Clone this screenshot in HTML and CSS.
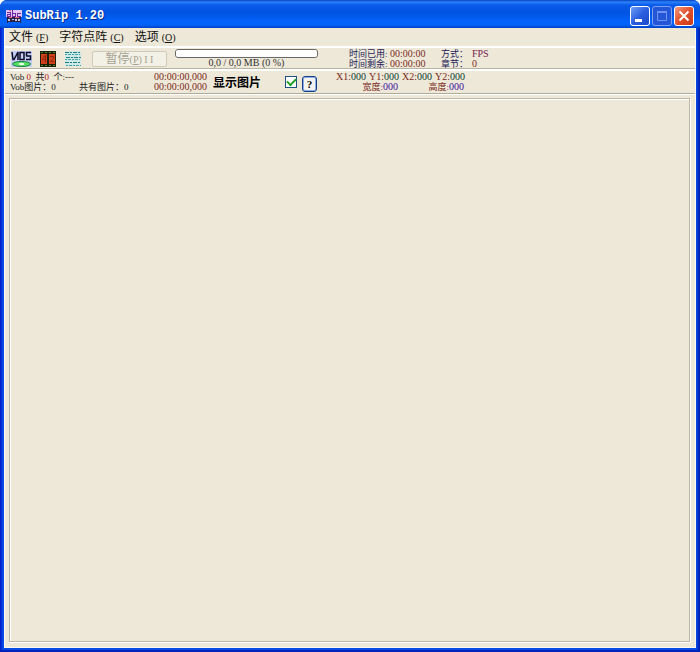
FILE: index.html
```html
<!DOCTYPE html>
<html lang="zh">
<head>
	<meta charset="UTF-8">
	<title>SubRip 1.20</title>
<link rel="stylesheet" href="styles.css">
</head>
<body>
<div class="window">
	<div class="titlebar">
		<svg class="logo" width="16" height="16" viewBox="0 0 16 16" shape-rendering="crispEdges">
			<path fill="#2a2348" d="M1 9h14v6h-1v-1H2v1H1z"/>
			<path fill="#e3c4f2" d="M0 2h16v7H0z"/>
			<path fill="none" stroke="#6d28a0" d="M1 4.500h3M4.500 4v5M4 8.500H1.500v-2H4M6.500 2v7M7 5.500h2.500v3H7M15 5.500h-3.500v3H15"/>
			<path fill="#e8607c" d="M3 9h3v1H3zM9 9h4v1H9zM3 2h2v1H3z"/>
			<path fill="#c9c3e6" d="M2 11h2v2H2zM6 11h2v1H6zM9 11h2v2H9zM12 11h2v2h-2z"/>
		</svg>
		<span class="title">SubRip 1.20</span>
		<button class="winbtn" aria-label="最小化">
			<svg width="18" height="18" viewBox="0 0 18 18"><path fill="#fff" d="M4 12h7v3H4z"/></svg>
		</button>
		<button class="winbtn off" aria-label="最大化" disabled>
			<svg width="18" height="18" viewBox="0 0 18 18"><path fill="none" stroke="#6f93f2" d="M4.500 5.500h9v8h-9zM4 4.500h10"/></svg>
		</button>
		<button class="winbtn close" aria-label="关闭">
			<svg width="18" height="18" viewBox="0 0 18 18"><path stroke="#fff" stroke-width="2" d="M4.500 4.500l9 9M13.500 4.500l-9 9"/></svg>
		</button>
	</div>
	<div class="client">
		<div class="menu">
			<a href="#">文件 <span>(<u>F</u>)</span></a>
			<a href="#">字符点阵 <span>(<u>C</u>)</span></a>
			<a href="#">选项 <span>(<u>O</u>)</span></a>
		</div>
		<div class="toolbar">
			<button class="tool" aria-label="VOB">
				<svg width="21" height="18" viewBox="0 0 21 18">
					<path fill="#c5cdf5" d="M0 1h21v16H0z"/>
					<path fill="none" stroke="#0a0a24" stroke-width="1.500" d="M1 2l1 7.500h1L7 2v8M9 2.500h4v7H9zM20 2.500h-4.500v3.500M15 6h4.500v3.500H15"/>
					<ellipse cx="10.500" cy="14" rx="9" ry="2.500" fill="#56e05c" stroke="#17804b"/>
					<ellipse cx="10.500" cy="14" rx="3" ry="1" fill="#fff"/>
				</svg>
			</button>
			<button class="tool" aria-label="胶片">
				<svg width="18" height="18" viewBox="0 0 18 18">
					<path fill="#1c1d0a" d="M1 1h16v16H1z"/>
					<path fill="#d1401a" d="M2 4h6v10H2zM10 4h6v10h-6z"/>
					<path fill="none" stroke="#3f8a24" stroke-dasharray="2 2" d="M2 2.500h14M2 15.500h14"/>
					<path fill="none" stroke="#8a2a0c" d="M6.500 5v7M6 5.500L3.500 9.500H7M11 6.500h3.500v2l-3 3H15"/>
				</svg>
			</button>
			<button class="tool" aria-label="文本">
				<svg width="18" height="18" viewBox="0 0 18 18">
					<path fill="#cfe9e4" d="M1 1h16v15H1z"/>
					<path fill="none" stroke="#207c86" stroke-dasharray="4 1 2 1" d="M1 2.500h16M2 7.500h15M1 12.500h15"/>
					<path fill="none" stroke="#3ba3aa" stroke-dasharray="2 1 3 1" d="M1 4.500h15M1 9.500h15M2 15.500h15"/>
				</svg>
			</button>
			<button class="pause" disabled>暂停<span>(<u>P</u>) I I</span></button>
			<div class="load">
				<progress value="0" max="100" aria-label="进度"></progress>
				<span>0,0 / 0,0 MB (0 %)</span>
			</div>
			<div class="elapsed">
				<span class="zh">时间已用:</span><span class="red">00:00:00</span>
				<span class="zh">时间剩余:</span><span class="red">00:00:00</span>
			</div>
			<div class="mode">
				<span class="zh">方式：</span><span class="plum">FPS</span>
				<span class="zh">章节：</span><span class="red">0</span>
			</div>
		</div>
		<div class="info">
			<div class="vob">
				<div class="wide zh">Vob <span class="num">0</span> &nbsp;共<span class="num">0</span> &nbsp;个:---</div>
				<div class="zh">Vob图片：0</div>
				<div class="zh">共有图片：0</div>
			</div>
			<div class="times">
				<div>00:00:00,000</div>
				<div>00:00:00,000</div>
			</div>
			<label class="show" for="show">显示图片</label>
			<input type="checkbox" id="show" class="check" checked>
			<button class="help">?</button>
			<div class="coords">
				<div>X1:<b>000</b></div>
				<div>Y1:<b>000</b></div>
				<div>X2:<b>000</b></div>
				<div>Y2:<b>000</b></div>
				<div class="size"><span class="zh">宽度:</span><i>000</i></div>
				<div class="size"><span class="zh">高度:</span><i>000</i></div>
			</div>
		</div>
		<div class="view">
			<div class="picture"></div>
		</div>
	</div>
</div>
</body>
</html>
```

FILE: styles.css
```css
*{box-sizing: border-box;}
body,div,p,button,input{padding: 0;margin: 0;}
body{
	background: #fff;
	font-family: "Liberation Serif","Noto Sans CJK SC",serif;
	font-size: 10px;
	line-height: 10px;
	color: #222;
}
.window{
	display: flex;
	flex-direction: column;
	min-height: 100vh;
	padding: 0 4px 4px;
	border-radius: 7px 7px 0 0;
	background: linear-gradient(to right,#0019c8,#0a4be8 3px,#0a4be8 calc(100% - 4px),#0018a8);
	box-shadow: inset 0 -2px 0 #0024b8;
}
.titlebar{
	display: flex;
	align-items: center;
	gap: 2px;
	height: 28px;
	margin: 0 -4px;
	padding: 3px 6px 0;
	border-radius: 7px 7px 0 0;
	background: linear-gradient(#0840c0,#2b82fb 2px,#0a5bea 5px,#0053e0 12px,#0263fc 22px,#0262f6 25px,#0040c4);
}
.title{
	flex: 1;
	padding-left: 1px;
	font: bold 12px/16px "Liberation Mono",monospace;
	color: #fff;
	text-shadow: 1px 1px 0 #0b2b8c;
}
.winbtn{
	display: flex;
	width: 20px;
	height: 20px;
	border: 1px solid #fff;
	border-radius: 3px;
	background: linear-gradient(135deg,#6f9cf7,#2a5fe0 50%,#1a48c8);
}
.off{
	border-color: #7f9ff0;
	background: #2457d8;
}
.close{
	background: linear-gradient(135deg,#f09a7c,#e2502c 50%,#c83a14);
}
.client{
	display: flex;
	flex-direction: column;
	flex: 1;
	border: 1px solid #fbfaf2;
	border-top: 0;
	background: #ede8d8;
}
.menu{
	display: flex;
	gap: 11px;
	height: 20px;
	padding: 0 4px;
	border-bottom: 2px solid #fff;
}
.menu a{
	font-size: 12px;
	line-height: 19px;
	color: #111;
	text-decoration: none;
}
.menu span,.pause span{font-size: 10px;}
.toolbar{
	display: flex;
	align-items: center;
	height: 21px;
	padding: 1px 0 0 6px;
	border-bottom: 1px solid #b8b4a2;
}
.tool{
	display: flex;
	margin-right: 7px;
	border: 0;
	background: none;
}
.pause{
	width: 75px;
	height: 16px;
	margin-left: 3px;
	border: 1px solid #cdcabb;
	border-radius: 2px;
	background: #f3f1e6;
	font: 12px/14px "Liberation Serif","Noto Sans CJK SC",serif;
	color: #a5a292;
}
.load{
	display: flex;
	flex-direction: column;
	align-items: center;
	width: 143px;
	margin: 0 31px 0 8px;
	color: #333;
}
progress{
	appearance: none;
	width: 100%;
	height: 9px;
	border: 1px solid #686868;
	border-radius: 3px;
	background: #fff;
}
progress::-webkit-progress-bar{
	border-radius: 3px;
	background: #fff;
}
.elapsed{
	display: grid;
	grid-template-columns: 41px auto;
	width: 92px;
	color: #1c2258;
	white-space: nowrap;
}
.mode{
	display: grid;
	grid-template-columns: 31px auto;
	color: #1c2258;
}
.zh{font-size: 9px;}
.red{color: #7c2a1c;}
.plum{color: #7a1c50;}
.num{color: #b01010;}
.info{
	display: flex;
	align-items: center;
	height: 25px;
	padding-left: 5px;
	border-top: 2px solid #fff;
	border-bottom: 1px solid #b0ac9c;
}
.vob{
	display: grid;
	grid-template-columns: 69px auto;
	width: 144px;
	white-space: nowrap;
}
.wide{grid-column: 1 / 3;}
.times{
	width: 59px;
	color: #7c2a1c;
}
.show{
	width: 72px;
	font: bold 12px/14px "Noto Sans CJK SC",sans-serif;
	color: #000;
}
.check{
	appearance: none;
	width: 12px;
	height: 12px;
	margin-right: 5px;
	border: 1px solid #1d5180;
	background: #fff;
	display: grid;
	place-items: center;
}
.check:checked::before{
	content: "";
	width: 7px;
	height: 4px;
	margin-bottom: 2px;
	border: solid #21a121;
	border-width: 0 0 2px 2px;
	transform: rotate(-45deg);
}
.help{
	width: 15px;
	height: 16px;
	margin-top: 4px;
	border: 1px solid #123f80;
	border-radius: 3px;
	background: #f4f3ee;
	box-shadow: inset 0 0 0 1px #8cabe8;
	font: bold 11px/14px "Liberation Serif",serif;
	color: #000;
}
.coords{
	display: grid;
	grid-template-columns: repeat(4,33px);
	margin-left: 19px;
	color: #7c2a1c;
	white-space: nowrap;
}
.coords b{
	font-weight: normal;
	color: #0d4034;
}
.coords i{
	font-style: normal;
	color: #3a10a0;
}
.size{
	grid-column: span 2;
	padding-right: 4px;
	text-align: right;
}
.view{
	display: flex;
	flex: 1;
	padding: 3px 5px 5px 4px;
	border-top: 1px solid #fff;
}
.picture{
	flex: 1;
	border: 1px solid #bcb8a8;
	box-shadow: inset 1px 1px 0 #fff,1px 1px 0 #fff;
}
```
